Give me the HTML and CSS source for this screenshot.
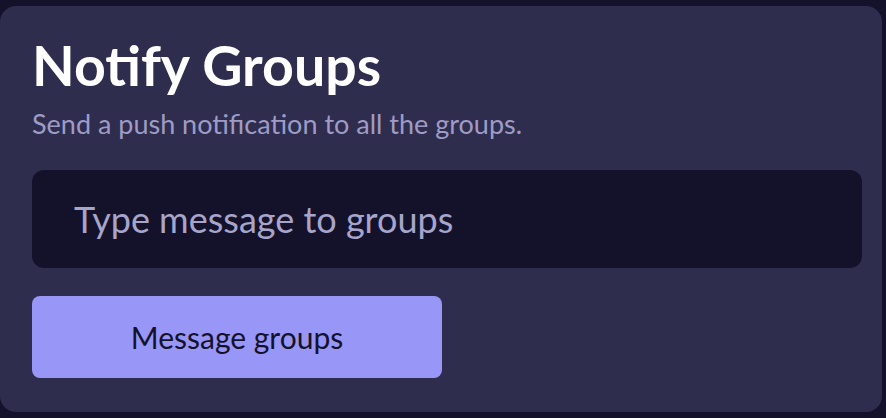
FILE: index.html
```html
<!DOCTYPE html>
<html>
<head>
<meta charset="utf-8">
<link rel="stylesheet" href="styles.css">
</head>
<body>
<div class="card">
  <h1 class="title">Notify Groups</h1>
  <p class="subtitle">Send a push notification to all the groups.</p>
  <input class="msg" type="text" placeholder="Type message to groups">
  <button class="btn">Message groups</button>
</div>
</body>
</html>
```
FILE: styles.css
```css
html, body {
  margin: 0;
  padding: 0;
  background: #14122b;
  width: 886px;
  height: 418px;
  overflow: hidden;
}
body {
  padding-top: 6px;
  box-sizing: border-box;
  font-family: Lato, "Noto Sans", sans-serif;
}
.card {
  width: 882px;
  height: 406px;
  background: #2f2d4e;
  border-radius: 16px;
  box-sizing: border-box;
  padding: 26px 24px 0 32px;
  display: flex;
  flex-direction: column;
  align-items: flex-start;
}
.title {
  margin: 0;
  font-size: 55.5px;
  font-weight: 700;
  color: #ffffff;
  line-height: 66px;
}
.subtitle {
  margin: 10px 0 0 0;
  font-size: 27px;
  color: #9e9cc6;
  line-height: 32px;
}
.msg {
  margin-top: 30px;
  width: 830px;
  height: 98px;
  box-sizing: border-box;
  border: none;
  outline: none;
  border-radius: 12px;
  background: #14122a;
  padding: 0 0 0 42px;
  font-family: Lato, sans-serif;
  font-size: 36px;
  color: #a7a5ca;
}
.msg::placeholder {
  color: #a7a5ca;
}
.btn {
  margin-top: 28px;
  width: 410px;
  height: 82px;
  border: none;
  border-radius: 8px;
  background: #9896f6;
  color: #14122b;
  font-family: Lato, sans-serif;
  font-size: 30px;
}
```
